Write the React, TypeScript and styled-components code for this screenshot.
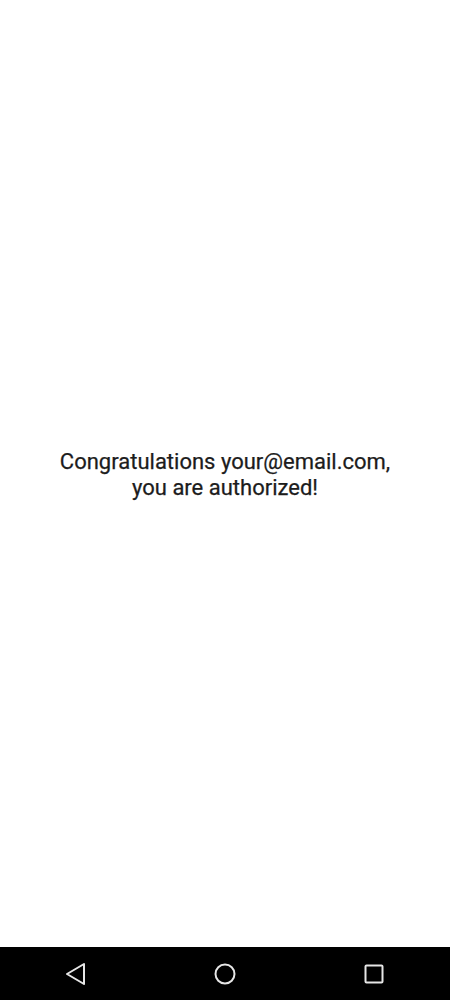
import React from "react";
import styled, { createGlobalStyle } from "styled-components";

const Global = createGlobalStyle`
  html, body { margin: 0; padding: 0; background: #fff; }
  #root { height: 1000px; }
`;

const Screen = styled.div`
  width: 450px;
  height: 1000px;
  display: flex;
  flex-direction: column;
  font-family: Roboto, "Noto Sans", sans-serif;
`;

const Content = styled.main`
  flex: 1;
  display: flex;
  align-items: center;
  justify-content: center;
  background: #fff;
`;

const Message = styled.p`
  margin: 0;
  padding-top: 2px;
  text-align: center;
  font-size: 22px;
  font-weight: 400;
  line-height: 26px;
  color: #1c1c1c;
  -webkit-text-stroke: 0.25px #1c1c1c;
`;

const NavBar = styled.nav`
  height: 53px;
  background: #000;
  display: grid;
  grid-template-columns: 1fr 1fr 1fr;
  align-items: center;
  justify-items: center;
`;

const NavButton = styled.div<{ $shift?: number }>`
  display: flex;
  align-items: center;
  justify-content: center;
  transform: translateX(${(p) => p.$shift ?? 0}px);
`;

export default function App() {
  return (
    <>
      <Global />
      <Screen>
        <Content>
          <Message>
            Congratulations your@email.com,
            <br />
            you are authorized!
          </Message>
        </Content>
        <NavBar>
          <NavButton $shift={1}>
            <svg width="24" height="24" viewBox="0 0 24 24">
              <path d="M20 2 L3 12 L20 22 Z" fill="none" stroke="#e6e6e6" strokeWidth="2" strokeLinejoin="round" />
            </svg>
          </NavButton>
          <NavButton>
            <svg width="24" height="24" viewBox="0 0 24 24">
              <circle cx="12" cy="12" r="9.5" fill="none" stroke="#e6e6e6" strokeWidth="2" />
            </svg>
          </NavButton>
          <NavButton $shift={-1}>
            <svg width="22" height="22" viewBox="0 0 22 22">
              <rect x="2.5" y="2.5" width="17" height="17" rx="1" fill="none" stroke="#e6e6e6" strokeWidth="2" />
            </svg>
          </NavButton>
        </NavBar>
      </Screen>
    </>
  );
}
